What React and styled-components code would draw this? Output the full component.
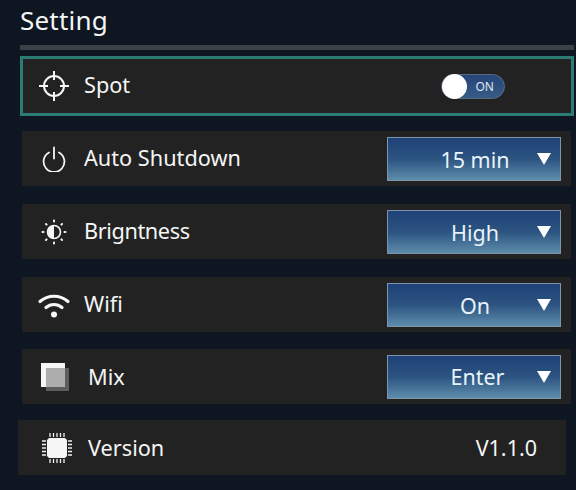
import React from "react";
import styled, { createGlobalStyle } from "styled-components";

const GlobalStyle = createGlobalStyle`
  html, body {
    margin: 0;
    padding: 0;
    background: #0e1621;
  }
`;

const Page = styled.div`
  width: 576px;
  height: 490px;
  box-sizing: border-box;
  overflow: hidden;
  padding: 0 2px 0 20px;
  font-family: "Noto Sans", "Open Sans", sans-serif;
  color: #f4f5f5;
  background: #0e1621;
`;

const Title = styled.h1`
  margin: 0;
  height: 45px;
  font-size: 26px;
  line-height: 41px;
  font-weight: 400;
  letter-spacing: 0.2px;
`;

const Divider = styled.div`
  height: 5px;
  margin-bottom: 6px;
  background: #3a4248;
`;

const SpotRow = styled.div`
  height: 60px;
  box-sizing: border-box;
  margin-bottom: 15px;
  padding: 0 66px 0 18px;
  display: flex;
  align-items: center;
  background: #232222;
  border: 3px solid #2b7d73;
`;

const Row = styled.div`
  height: 55px;
  box-sizing: border-box;
  width: ${(props) => props.$width || 549}px;
  margin-left: ${(props) => props.$shift ?? 2}px;
  margin-bottom: ${(props) => props.$gap ?? 18}px;
  padding-left: ${(props) => props.$pad ?? 19}px;
  padding-right: ${(props) => props.$padRight ?? 10}px;
  display: flex;
  align-items: center;
  background: #232222;
`;

const IconSlot = styled.div`
  width: 26px;
  height: 30px;
  flex: none;
  margin-right: ${(props) => props.$space ?? 17}px;
  display: flex;
  align-items: center;
  justify-content: center;

  svg {
    flex: none;
  }
`;

const Label = styled.span`
  flex: 1;
  margin-top: ${(props) => props.$lift ?? -2}px;
  font-size: 21.7px;
  line-height: 28px;
  letter-spacing: ${(props) => props.$tracking ?? 0}px;
`;

const Value = styled.span`
  font-size: 21.5px;
  line-height: 28px;
`;

const Toggle = styled.div`
  position: relative;
  width: 64px;
  height: 25px;
  box-sizing: border-box;
  padding-right: 10px;
  display: flex;
  align-items: center;
  justify-content: flex-end;
  border-radius: 13px;
  border: 1px solid #5a6b80;
  background: linear-gradient(#26457a, #375c85);
  font-size: 12px;
  color: #dfe7ef;
`;

const Knob = styled.div`
  position: absolute;
  left: 0;
  top: -1px;
  width: 25px;
  height: 25px;
  border-radius: 50%;
  background: #ffffff;
`;

const Select = styled.div`
  width: 174px;
  height: 44px;
  box-sizing: border-box;
  padding: 0 9px 0 0;
  display: flex;
  align-items: center;
  border: 1px solid #7d94ad;
  background: linear-gradient(#1f4177 0%, #2c5481 50%, #5d8cab 100%);
  color: #e8f3fa;
`;

const SelectText = styled.span`
  flex: 1;
  text-align: center;
  padding-left: ${(props) => props.$indent ?? 25}px;
  padding-top: ${(props) => props.$drop ?? 2}px;
  font-size: 21.5px;
  line-height: 28px;
`;

const Arrow = styled.span`
  width: 0;
  height: 0;
  border-left: 7px solid transparent;
  border-right: 7px solid transparent;
  border-top: 12px solid #ffffff;
`;

const SpotIcon = () => (
  <svg width="30" height="30" viewBox="0 0 30 30" fill="none" stroke="#f4f5f5" strokeWidth="2">
    <circle cx="15" cy="15" r="10" />
    <path d="M15 0v9M15 21v9M0 15h9M21 15h9" />
  </svg>
);

const PowerIcon = () => (
  <svg width="26" height="26" viewBox="0 0 26 26" fill="none" stroke="#f4f5f5" strokeWidth="1.8" strokeLinecap="round">
    <path d="M8 6.5a10.4 10.4 0 1 0 10 0" />
    <path d="M13 1.5v11" />
  </svg>
);

const BrightnessIcon = () => (
  <svg width="28" height="28" viewBox="0 0 28 28" fill="none">
    <circle cx="14" cy="14" r="6.5" stroke="#f4f5f5" strokeWidth="1.6" />
    <path d="M14 7.5a6.5 6.5 0 0 0 0 13z" fill="#f4f5f5" />
    <g stroke="#f4f5f5" strokeWidth="2" strokeLinecap="round">
      <path d="M14 2.5v1M14 24.5v1M2.5 14h1M24.5 14h1M6 6l.6.6M21.4 21.4l.6.6M6 22l.6-.6M21.4 6.6l.6-.6" />
    </g>
  </svg>
);

const WifiIcon = () => (
  <svg width="34" height="28" viewBox="0 0 34 28" fill="none" stroke="#f6f7f7" strokeWidth="3.2" strokeLinecap="round">
    <path d="M3 10.5c8-7 20-7 28 0" />
    <path d="M9 16.5c4.600-4 11.400-4 16 0" />
    <circle cx="17" cy="23.500" r="3" fill="#f6f7f7" stroke="none" />
  </svg>
);

const MixIcon = () => (
  <svg width="30" height="28" viewBox="0 0 30 28">
    <rect x="7" y="5" width="23" height="23" fill="#5d5d5d" />
    <rect x="2" y="0" width="24" height="24" fill="#f6f6f6" />
    <rect x="7" y="5" width="19" height="19" fill="#adadad" />
  </svg>
);

const ChipIcon = () => (
  <svg width="32" height="32" viewBox="0 0 32 32" fill="none">
    <g stroke="#f0f0f0" strokeWidth="1.3">
      <path d="M9 1v30M12.500 1v30M16 1v30M19.500 1v30M23 1v30" />
      <path d="M1 9h30M1 12.500h30M1 16h30M1 19.500h30M1 23h30" />
    </g>
    <rect x="5" y="5" width="22" height="22" fill="#232222" />
    <path d="M8 6h16l2 2v16l-2 2H8l-2-2V8z" fill="#f6f6f6" />
  </svg>
);

const rows = [
  { label: "Auto Shutdown", value: "15 min", icon: <PowerIcon /> },
  { label: "Brigntness", value: "High", icon: <BrightnessIcon />, tracking: -0.4 },
  { label: "Wifi", value: "On", icon: <WifiIcon />, gap: 17 },
];

export default function App() {
  return (
    <>
      <GlobalStyle />
      <Page>
        <Title>Setting</Title>
        <Divider />
        <SpotRow>
          <IconSlot>
            <SpotIcon />
          </IconSlot>
          <Label>Spot</Label>
          <Toggle>
            <Knob />
            ON
          </Toggle>
        </SpotRow>
        {rows.map((row) => (
          <Row key={row.label} $gap={row.gap}>
            <IconSlot>{row.icon}</IconSlot>
            <Label $tracking={row.tracking}>{row.label}</Label>
            <Select>
              <SelectText>{row.value}</SelectText>
              <Arrow />
            </Select>
          </Row>
        ))}
        <Row $gap={16}>
          <IconSlot $space={21}>
            <MixIcon />
          </IconSlot>
          <Label $lift={0}>Mix</Label>
          <Select>
            <SelectText $indent={30} $drop={0}>Enter</SelectText>
            <Arrow />
          </Select>
        </Row>
        <Row $shift={-2} $width={548} $pad={26} $padRight={29}>
          <IconSlot $space={18}>
            <ChipIcon />
          </IconSlot>
          <Label $lift={0}>Version</Label>
          <Value>V1.1.0</Value>
        </Row>
      </Page>
    </>
  );
}
